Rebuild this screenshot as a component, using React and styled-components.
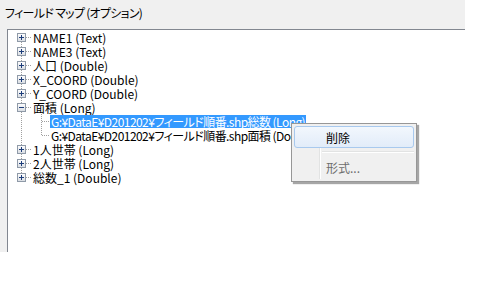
import React from 'react';
import styled, { createGlobalStyle } from 'styled-components';

const GlobalStyle = createGlobalStyle`
  body {
    margin: 0;
    background: #ffffff;
    font-family: "Noto Sans CJK JP", "Liberation Sans", sans-serif;
    font-feature-settings: "palt";
  }
`;

const Panel = styled.div`
  position: relative;
  width: 465px;
  height: 252px;
  background: #f0f0f0;
  display: flex;
  flex-direction: column;
`;

const Title = styled.div`
  height: 29px;
  box-sizing: border-box;
  padding: 5px 0 0 5px;
  font-size: 12px;
  line-height: 16px;
  letter-spacing: -0.7px;
  color: #000000;
`;

const TreeBox = styled.div`
  flex: 1;
  margin-left: 7px;
  background: #ffffff;
  border-top: 1px solid #828790;
  border-left: 1px solid #828790;
`;

const Row = styled.div`
  display: flex;
  align-items: center;
  height: 14px;
  font-size: 12px;
  line-height: 13px;
  white-space: nowrap;
`;

const Label = styled.span`
  display: inline-block;
  height: 13px;
  line-height: 13px;
  padding: 0 1px;
  letter-spacing: ${(p) => (p.tight ? '-0.55px' : '0')};
  background: ${(p) => (p.selected ? '#3399ff' : 'transparent')};
  color: ${(p) => (p.selected ? '#ffffff' : '#000000')};
`;

const Menu = styled.div`
  position: absolute;
  left: 291px;
  top: 123px;
  width: 126px;
  height: 59px;
  box-sizing: border-box;
  border: 1px solid #979797;
  background: #f0f0f0;
  box-shadow: 2px 2px 1px rgba(0, 0, 0, 0.35);
  padding: 2px;
  font-size: 12px;

  &::before {
    content: '';
    position: absolute;
    left: 27px;
    top: 2px;
    bottom: 2px;
    width: 1px;
    background: #e2e3e3;
    box-shadow: 1px 0 0 #ffffff;
  }
`;

const MenuItem = styled.div`
  position: relative;
  height: 22px;
  box-sizing: border-box;
  display: flex;
  align-items: center;
  padding-left: 31px;
  border-radius: 3px;
  border: 1px solid ${(p) => (p.active ? '#a8c9ee' : 'transparent')};
  background: ${(p) =>
    p.active ? 'linear-gradient(#f2f7fd, #e2ecf9)' : 'transparent'};
  color: ${(p) => (p.disabled ? '#6d6d6d' : '#000000')};
`;

const Separator = styled.div`
  margin: 3px 0 3px 28px;
  height: 1px;
  background: #e2e3e3;
  border-bottom: 1px solid #ffffff;
`;

const DOT = '#a0a0a0';

const TreeLines = ({ depth, box, expanded, first, last, childLast }) => {
  const width = 24 + depth * 18;
  const cx = 13.5;
  const lines = [];
  if (box) {
    if (!first) lines.push(<line key="up" x1={cx} y1={0} x2={cx} y2={3} />);
    if (!last) lines.push(<line key="dn" x1={cx} y1={12} x2={cx} y2={14} />);
  } else {
    lines.push(<line key="rv" x1={cx} y1={0} x2={cx} y2={14} />);
  }
  if (depth === 0) {
    lines.push(<line key="h" x1={18} y1={7.5} x2={24} y2={7.5} />);
  } else {
    const ccx = 33.5;
    lines.push(<line key="cv" x1={ccx} y1={0} x2={ccx} y2={childLast ? 8 : 14} />);
    lines.push(<line key="ch" x1={34} y1={7.5} x2={42} y2={7.5} />);
  }
  return (
    <svg width={width} height={14} style={{ flex: 'none' }} shapeRendering="crispEdges">
      <g stroke={DOT} strokeWidth={1} strokeDasharray="1 1">
        {lines}
      </g>
      {box && (
        <g>
          <defs>
            <linearGradient id="bx" x1="0" y1="0" x2="0" y2="1">
              <stop offset="0" stopColor="#ffffff" />
              <stop offset="1" stopColor="#d8dce2" />
            </linearGradient>
          </defs>
          <rect x={9.5} y={3.5} width={8} height={8} fill="url(#bx)" stroke="#8f9aa8" />
          <line x1={11} y1={7.5} x2={16} y2={7.5} stroke="#1d3d7a" />
          {!expanded && <line x1={13.5} y1={5} x2={13.5} y2={10} stroke="#1d3d7a" />}
        </g>
      )}
    </svg>
  );
};

const items = [
  { text: 'NAME1 (Text)', box: true },
  { text: 'NAME3 (Text)', box: true },
  { text: '人口 (Double)', box: true },
  { text: 'X_COORD (Double)', box: true },
  { text: 'Y_COORD (Double)', box: true },
  { text: '面積 (Long)', box: true, expanded: true },
  { text: 'G:¥DataE¥D201202¥フィールド順番.shp総数 (Long)', depth: 1, selected: true },
  { text: 'G:¥DataE¥D201202¥フィールド順番.shp面積 (Double)', depth: 1, childLast: true },
  { text: '1人世帯 (Long)', box: true },
  { text: '2人世帯 (Long)', box: true },
  { text: '総数_1 (Double)', box: true, last: true },
];

export default function App() {
  return (
    <>
      <GlobalStyle />
      <Panel>
        <Title>フィールド マップ (オプション)</Title>
        <TreeBox>
          {items.map((it, i) => (
            <Row key={i}>
              <TreeLines
                depth={it.depth || 0}
                box={it.box}
                expanded={it.expanded}
                first={i === 0}
                last={it.last}
                childLast={it.childLast}
              />
              <Label selected={it.selected} tight={it.depth === 1}>{it.text}</Label>
            </Row>
          ))}
        </TreeBox>
        <Menu>
          <MenuItem active>削除</MenuItem>
          <Separator />
          <MenuItem disabled>形式...</MenuItem>
        </Menu>
      </Panel>
    </>
  );
}
